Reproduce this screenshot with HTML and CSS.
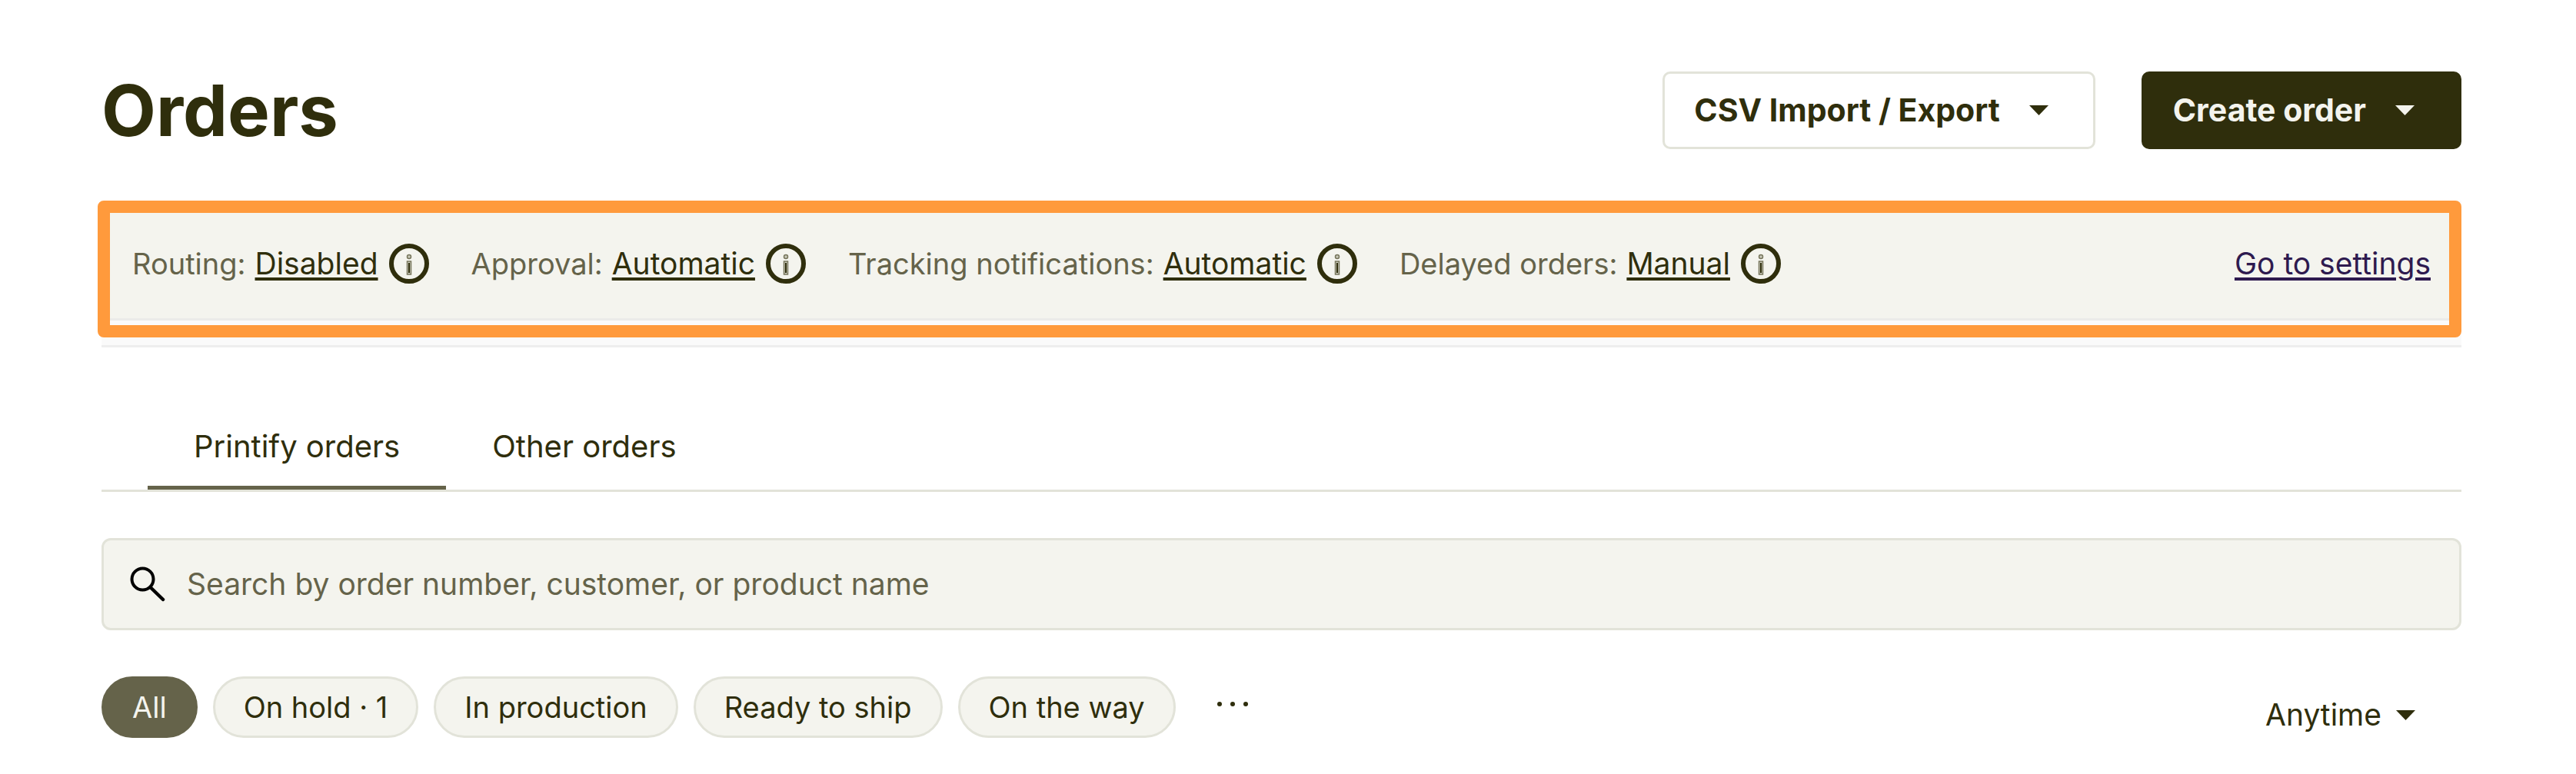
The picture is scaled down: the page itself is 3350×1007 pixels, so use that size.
FILE: index.html
```html
<!DOCTYPE html>
<html lang="en">
<head>
  <meta charset="utf-8">
  <meta name="viewport" content="width=device-width, initial-scale=1">
  <title>Orders</title>
  <link rel="stylesheet" href="styles.css">
</head>
<body>
  <svg class="sprite" aria-hidden="true">
    <symbol id="info" viewBox="0 0 52 52">
      <circle cx="26" cy="26" r="23" fill="none" stroke="#2f2e0c" stroke-width="6"/>
      <circle cx="26" cy="17" r="2.5" fill="#c9c9ba" stroke="#77765c" stroke-width="1.5"/>
      <rect x="23.5" y="23" width="5" height="17" fill="#c9c9ba" stroke="#77765c" stroke-width="1.5"/>
      <rect x="25" y="25" width="2" height="13" fill="#2f2e0c"/>
    </symbol>
    <symbol id="caret" viewBox="0 0 25 13">
      <path d="M0 0h25L12.500 13z" fill="currentColor"/>
    </symbol>
  </svg>

  <main class="page">
    <header class="header">
      <h1 class="title">Orders</h1>
      <div class="actions">
        <button class="button" type="button">CSV Import / Export <svg class="caret"><use href="#caret"/></svg></button>
        <button class="button button-primary" type="button">Create order <svg class="caret"><use href="#caret"/></svg></button>
      </div>
    </header>

    <div class="settings-area">
      <section class="highlight" aria-label="Order settings">
        <div class="settings">
          <div class="setting">Routing: <a class="value" href="#routing">Disabled</a><svg class="info"><use href="#info"/></svg></div>
          <div class="setting">Approval: <a class="value" href="#approval">Automatic</a><svg class="info"><use href="#info"/></svg></div>
          <div class="setting">Tracking notifications: <a class="value" href="#tracking">Automatic</a><svg class="info"><use href="#info"/></svg></div>
          <div class="setting">Delayed orders: <a class="value" href="#delayed">Manual</a><svg class="info"><use href="#info"/></svg></div>
          <a class="settings-link" href="#settings">Go to settings</a>
        </div>
      </section>
    </div>

    <nav class="tabs">
      <a class="tab tab-active" href="#printify" aria-current="page">Printify orders</a>
      <a class="tab" href="#other">Other orders</a>
    </nav>

    <label class="search">
      <svg class="search-icon" viewBox="0 0 46 46" aria-hidden="true">
        <circle cx="16.500" cy="16.500" r="14" fill="none" stroke="#000" stroke-width="4"/>
        <path d="M27 27.500L43 43" fill="none" stroke="#000" stroke-width="4.500" stroke-linecap="round"/>
      </svg>
      <input class="search-input" type="search" aria-label="Search orders" placeholder="Search by order number, customer, or product name">
    </label>

    <div class="filters">
      <div class="chips">
        <button class="chip chip-active" type="button">All</button>
        <button class="chip" type="button">On hold · 1</button>
        <button class="chip" type="button">In production</button>
        <button class="chip" type="button">Ready to ship</button>
        <button class="chip" type="button">On the way</button>
        <button class="more" type="button" aria-label="More filters">
          <svg class="dots" viewBox="0 0 42 8"><circle cx="4" cy="4" r="3"/><circle cx="21" cy="4" r="3"/><circle cx="38" cy="4" r="3"/></svg>
        </button>
      </div>
      <label class="period">
        <select class="period-select" aria-label="Period"><option>Anytime</option></select>
        <svg class="caret" aria-hidden="true"><use href="#caret"/></svg>
      </label>
    </div>
  </main>
</body>
</html>
```
FILE: styles.css
```css
:root {
  --ink: #2f2e0c;
  --muted: #65634a;
  --surface: #f4f4ee;
  --line: #e2e3d9;
}

* {
  box-sizing: border-box;
}

body {
  margin: 0;
  background: #fff;
  color: var(--ink);
  font: 400 39px/50px Inter, "Liberation Sans", sans-serif;
}

button,
input,
select {
  margin: 0;
  color: inherit;
  font: inherit;
}

.sprite {
  display: none;
}

.page {
  padding: 93px 149px 47px 132px;
}

.caret {
  flex: none;
  width: 25px;
  height: 13px;
}

/* Header */

.header {
  display: flex;
  align-items: center;
  justify-content: space-between;
}

.title {
  margin: 0;
  font-size: 92px;
  font-weight: 700;
  line-height: 100px;
}

.actions {
  display: flex;
  gap: 60px;
}

.button {
  display: flex;
  align-items: center;
  gap: 38px;
  padding: 22px 58px 23px 38px;
  border: 3px solid var(--line);
  border-radius: 10px;
  background: #fff;
  font-size: 41px;
  font-weight: 700;
}

.button-primary {
  border-color: var(--ink);
  background: var(--ink);
  color: var(--surface);
}

/* Settings bar */

.settings-area {
  margin-top: 67px;
  padding-bottom: 10px;
  border-bottom: 3px solid #eee;
  background: #fafafa;
}

.highlight {
  margin-left: -5px;
  padding-bottom: 6px;
  border: 16px solid #ff9a3c;
  border-radius: 8px;
  background: #fafafa;
}

.settings {
  display: flex;
  align-items: center;
  gap: 55px;
  padding: 40px 24px 45px 29px;
  border-bottom: 3px solid #ebebe9;
  background: var(--surface);
}

.setting {
  display: flex;
  align-items: center;
  gap: 12px;
  color: var(--muted);
  font-size: 38px;
  white-space: nowrap;
}

.value,
.settings-link {
  color: var(--ink);
  font-size: 39px;
  text-decoration-thickness: 4px;
  text-underline-offset: 4px;
}

.settings-link {
  margin-left: auto;
  color: #2e1a4f;
}

.info {
  flex: none;
  width: 52px;
  height: 52px;
  margin-left: 2px;
}

/* Tabs */

.tabs {
  display: flex;
  margin-top: 104px;
  padding-left: 60px;
  border-bottom: 3px solid var(--line);
}

.tab {
  padding: 0 60px 26px;
  border-bottom: 5px solid transparent;
  color: var(--ink);
  font-size: 40px;
  text-decoration: none;
}

.tab-active {
  border-bottom-color: var(--muted);
}

/* Search */

.search {
  display: flex;
  align-items: center;
  gap: 28px;
  margin-top: 60px;
  padding: 32px 34px;
  border: 3px solid var(--line);
  border-radius: 12px;
  background: var(--surface);
}

.search-icon {
  flex: none;
  width: 46px;
  height: 46px;
}

.search-input {
  flex: 1;
  min-width: 0;
  padding: 0;
  border: 0;
  outline: 0;
  background: none;
  appearance: none;
}

.search-input::placeholder {
  color: var(--muted);
  opacity: 1;
}

/* Filters */

.filters {
  display: flex;
  align-items: flex-start;
  justify-content: space-between;
  margin-top: 60px;
}

.chips {
  display: flex;
  gap: 20px;
}

.chip {
  padding: 12px 37px;
  border: 3px solid var(--line);
  border-radius: 40px;
  background: var(--surface);
  font-size: 38px;
}

.chip-active {
  border-color: var(--muted);
  background: var(--muted);
  color: var(--surface);
}

.more {
  display: flex;
  align-items: center;
  padding: 0 33px 9px;
  border: 0;
  background: none;
}

.dots {
  width: 42px;
  height: 8px;
  fill: var(--ink);
}

.period {
  display: flex;
  align-items: center;
  gap: 19px;
  padding: 25px 60px 0 0;
}

.period-select {
  padding: 0;
  border: 0;
  background: none;
  appearance: none;
}
```
